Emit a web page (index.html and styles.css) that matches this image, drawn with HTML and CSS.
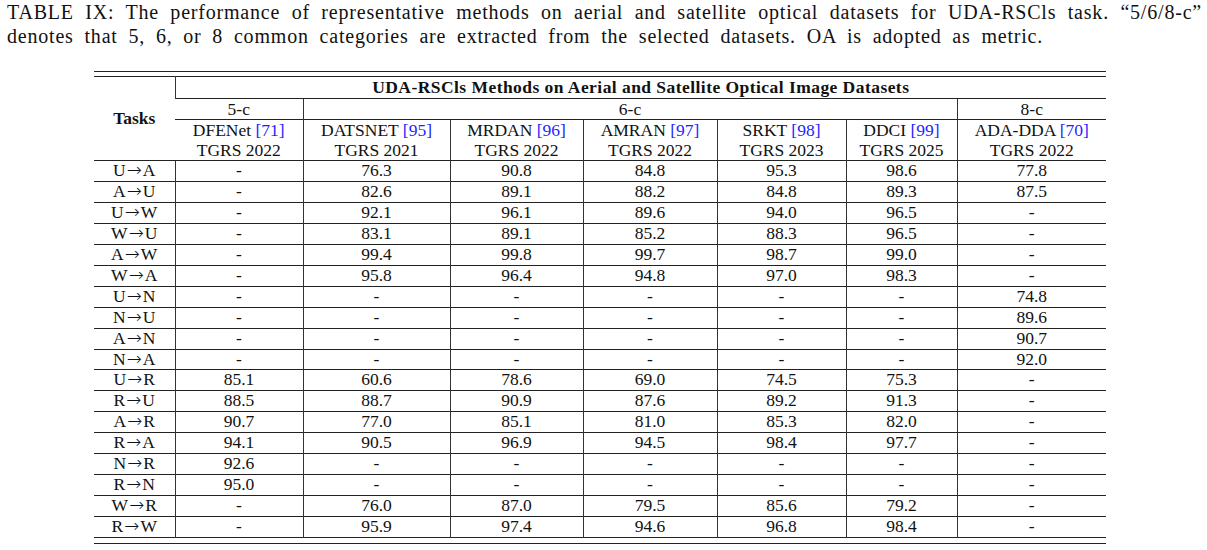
FILE: index.html
```html
<!DOCTYPE html>
<html lang="en">
<head>
    <meta charset="UTF-8">
    <meta name="viewport" content="width=device-width, initial-scale=1.0">
    <title>Table IX</title>
    <link rel="stylesheet" href="styles.css">
</head>
<body>
    <div class="page">
        <p class="caption">
            <span class="line">TABLE IX: The performance of representative methods on aerial and satellite optical datasets for UDA-RSCls task. “5/6/8-c”</span>
            <span class="rest">denotes that 5, 6, or 8 common categories are extracted from the selected datasets. OA is adopted as metric.</span>
        </p>

        <div class="rules">
            <table class="results">
                <colgroup>
                    <col class="c-task">
                    <col class="c-dfe">
                    <col class="c-dats">
                    <col class="c-mrdan">
                    <col class="c-amran">
                    <col class="c-srkt">
                    <col class="c-ddci">
                    <col class="c-ada">
                </colgroup>
                <thead>
                    <tr class="h-title">
                        <th rowspan="4" class="tasks">Tasks</th>
                        <th colspan="7">UDA-RSCls Methods on Aerial and Satellite Optical Image Datasets</th>
                    </tr>
                    <tr class="h-cat">
                        <td>5-c</td>
                        <td colspan="5">6-c</td>
                        <td>8-c</td>
                    </tr>
                    <tr class="h-name">
                        <td>DFENet <a href="#">[71]</a></td>
                        <td>DATSNET <a href="#">[95]</a></td>
                        <td>MRDAN <a href="#">[96]</a></td>
                        <td>AMRAN <a href="#">[97]</a></td>
                        <td>SRKT <a href="#">[98]</a></td>
                        <td>DDCI <a href="#">[99]</a></td>
                        <td>ADA-DDA <a href="#">[70]</a></td>
                    </tr>
                    <tr class="h-venue">
                        <td>TGRS 2022</td>
                        <td>TGRS 2021</td>
                        <td>TGRS 2022</td>
                        <td>TGRS 2022</td>
                        <td>TGRS 2023</td>
                        <td>TGRS 2025</td>
                        <td>TGRS 2022</td>
                    </tr>
                </thead>
                <tbody>
                    <tr><td>U<span class="arr">→</span>A</td><td>-</td><td>76.3</td><td>90.8</td><td>84.8</td><td>95.3</td><td>98.6</td><td>77.8</td></tr>
                    <tr><td>A<span class="arr">→</span>U</td><td>-</td><td>82.6</td><td>89.1</td><td>88.2</td><td>84.8</td><td>89.3</td><td>87.5</td></tr>
                    <tr><td>U<span class="arr">→</span>W</td><td>-</td><td>92.1</td><td>96.1</td><td>89.6</td><td>94.0</td><td>96.5</td><td>-</td></tr>
                    <tr><td>W<span class="arr">→</span>U</td><td>-</td><td>83.1</td><td>89.1</td><td>85.2</td><td>88.3</td><td>96.5</td><td>-</td></tr>
                    <tr><td>A<span class="arr">→</span>W</td><td>-</td><td>99.4</td><td>99.8</td><td>99.7</td><td>98.7</td><td>99.0</td><td>-</td></tr>
                    <tr><td>W<span class="arr">→</span>A</td><td>-</td><td>95.8</td><td>96.4</td><td>94.8</td><td>97.0</td><td>98.3</td><td>-</td></tr>
                    <tr><td>U<span class="arr">→</span>N</td><td>-</td><td>-</td><td>-</td><td>-</td><td>-</td><td>-</td><td>74.8</td></tr>
                    <tr><td>N<span class="arr">→</span>U</td><td>-</td><td>-</td><td>-</td><td>-</td><td>-</td><td>-</td><td>89.6</td></tr>
                    <tr><td>A<span class="arr">→</span>N</td><td>-</td><td>-</td><td>-</td><td>-</td><td>-</td><td>-</td><td>90.7</td></tr>
                    <tr><td>N<span class="arr">→</span>A</td><td>-</td><td>-</td><td>-</td><td>-</td><td>-</td><td>-</td><td>92.0</td></tr>
                    <tr><td>U<span class="arr">→</span>R</td><td>85.1</td><td>60.6</td><td>78.6</td><td>69.0</td><td>74.5</td><td>75.3</td><td>-</td></tr>
                    <tr><td>R<span class="arr">→</span>U</td><td>88.5</td><td>88.7</td><td>90.9</td><td>87.6</td><td>89.2</td><td>91.3</td><td>-</td></tr>
                    <tr><td>A<span class="arr">→</span>R</td><td>90.7</td><td>77.0</td><td>85.1</td><td>81.0</td><td>85.3</td><td>82.0</td><td>-</td></tr>
                    <tr><td>R<span class="arr">→</span>A</td><td>94.1</td><td>90.5</td><td>96.9</td><td>94.5</td><td>98.4</td><td>97.7</td><td>-</td></tr>
                    <tr><td>N<span class="arr">→</span>R</td><td>92.6</td><td>-</td><td>-</td><td>-</td><td>-</td><td>-</td><td>-</td></tr>
                    <tr><td>R<span class="arr">→</span>N</td><td>95.0</td><td>-</td><td>-</td><td>-</td><td>-</td><td>-</td><td>-</td></tr>
                    <tr><td>W<span class="arr">→</span>R</td><td>-</td><td>76.0</td><td>87.0</td><td>79.5</td><td>85.6</td><td>79.2</td><td>-</td></tr>
                    <tr><td>R<span class="arr">→</span>W</td><td>-</td><td>95.9</td><td>97.4</td><td>94.6</td><td>96.8</td><td>98.4</td><td>-</td></tr>
                </tbody>
            </table>
        </div>
    </div>
</body>
</html>
```

FILE: styles.css
```css
* {
    padding: 0;
    margin: 0;
    box-sizing: border-box;
}

body {
    background: #fff;
    color: #111;
    font-family: "Liberation Serif", "Times New Roman", serif;
}

.page {
    width: 1207px;
}

/* caption: first line is forced full width, second line runs ragged */
.caption {
    padding: 1px 5px 0 7px;
    font-size: 20px;
    line-height: 23.7px;
    letter-spacing: 0.8px;
}

.caption .line {
    display: block;
    text-align: justify;
    text-align-last: justify;
}

.caption .rest {
    display: block;
    word-spacing: 5px;
}

.rules {
    width: 1012px;
    margin: 23px 0 0 94px;
    border-top: 1px solid #222;
    border-bottom: 1px solid #222;
    padding: 4px 0 5px;
}

.results {
    width: 100%;
    border-collapse: collapse;
    table-layout: fixed;
    font-size: 17.5px;
    text-align: center;
    border-top: 1px solid #222;
    border-bottom: 1px solid #222;
}

.c-task { width: 81px; }
.c-dfe { width: 128px; }
.c-dats { width: 147px; }
.c-mrdan { width: 133px; }
.c-amran { width: 134px; }
.c-srkt { width: 129px; }
.c-ddci { width: 111px; }
.c-ada { width: 149px; }

.results th,
.results td {
    padding: 0;
    font-weight: normal;
    white-space: nowrap;
    border-top: 1px solid #222;
    border-left: 1px solid #333;
}

.results tr > :first-child {
    border-left: none;
}

.results th {
    font-weight: bold;
    letter-spacing: 0.45px;
}

.results .tasks {
    border-left: none;
    letter-spacing: 0;
}

.h-title th {
    height: 21px;
    line-height: 21px;
    border-top: none;
}

.h-cat td,
.h-name td,
.h-venue td {
    height: 20px;
    line-height: 20px;
}

.h-venue td {
    border-top: none;
}

tbody td {
    height: 19.9px;
    line-height: 19.9px;
}

.arr {
    display: inline-block;
    margin: 0 1px;
    font-family: "DejaVu Sans", sans-serif;
    font-size: 18px;
    line-height: 1;
    font-weight: 200;
}

.results a {
    color: #1f1fff;
    text-decoration: none;
}
```
